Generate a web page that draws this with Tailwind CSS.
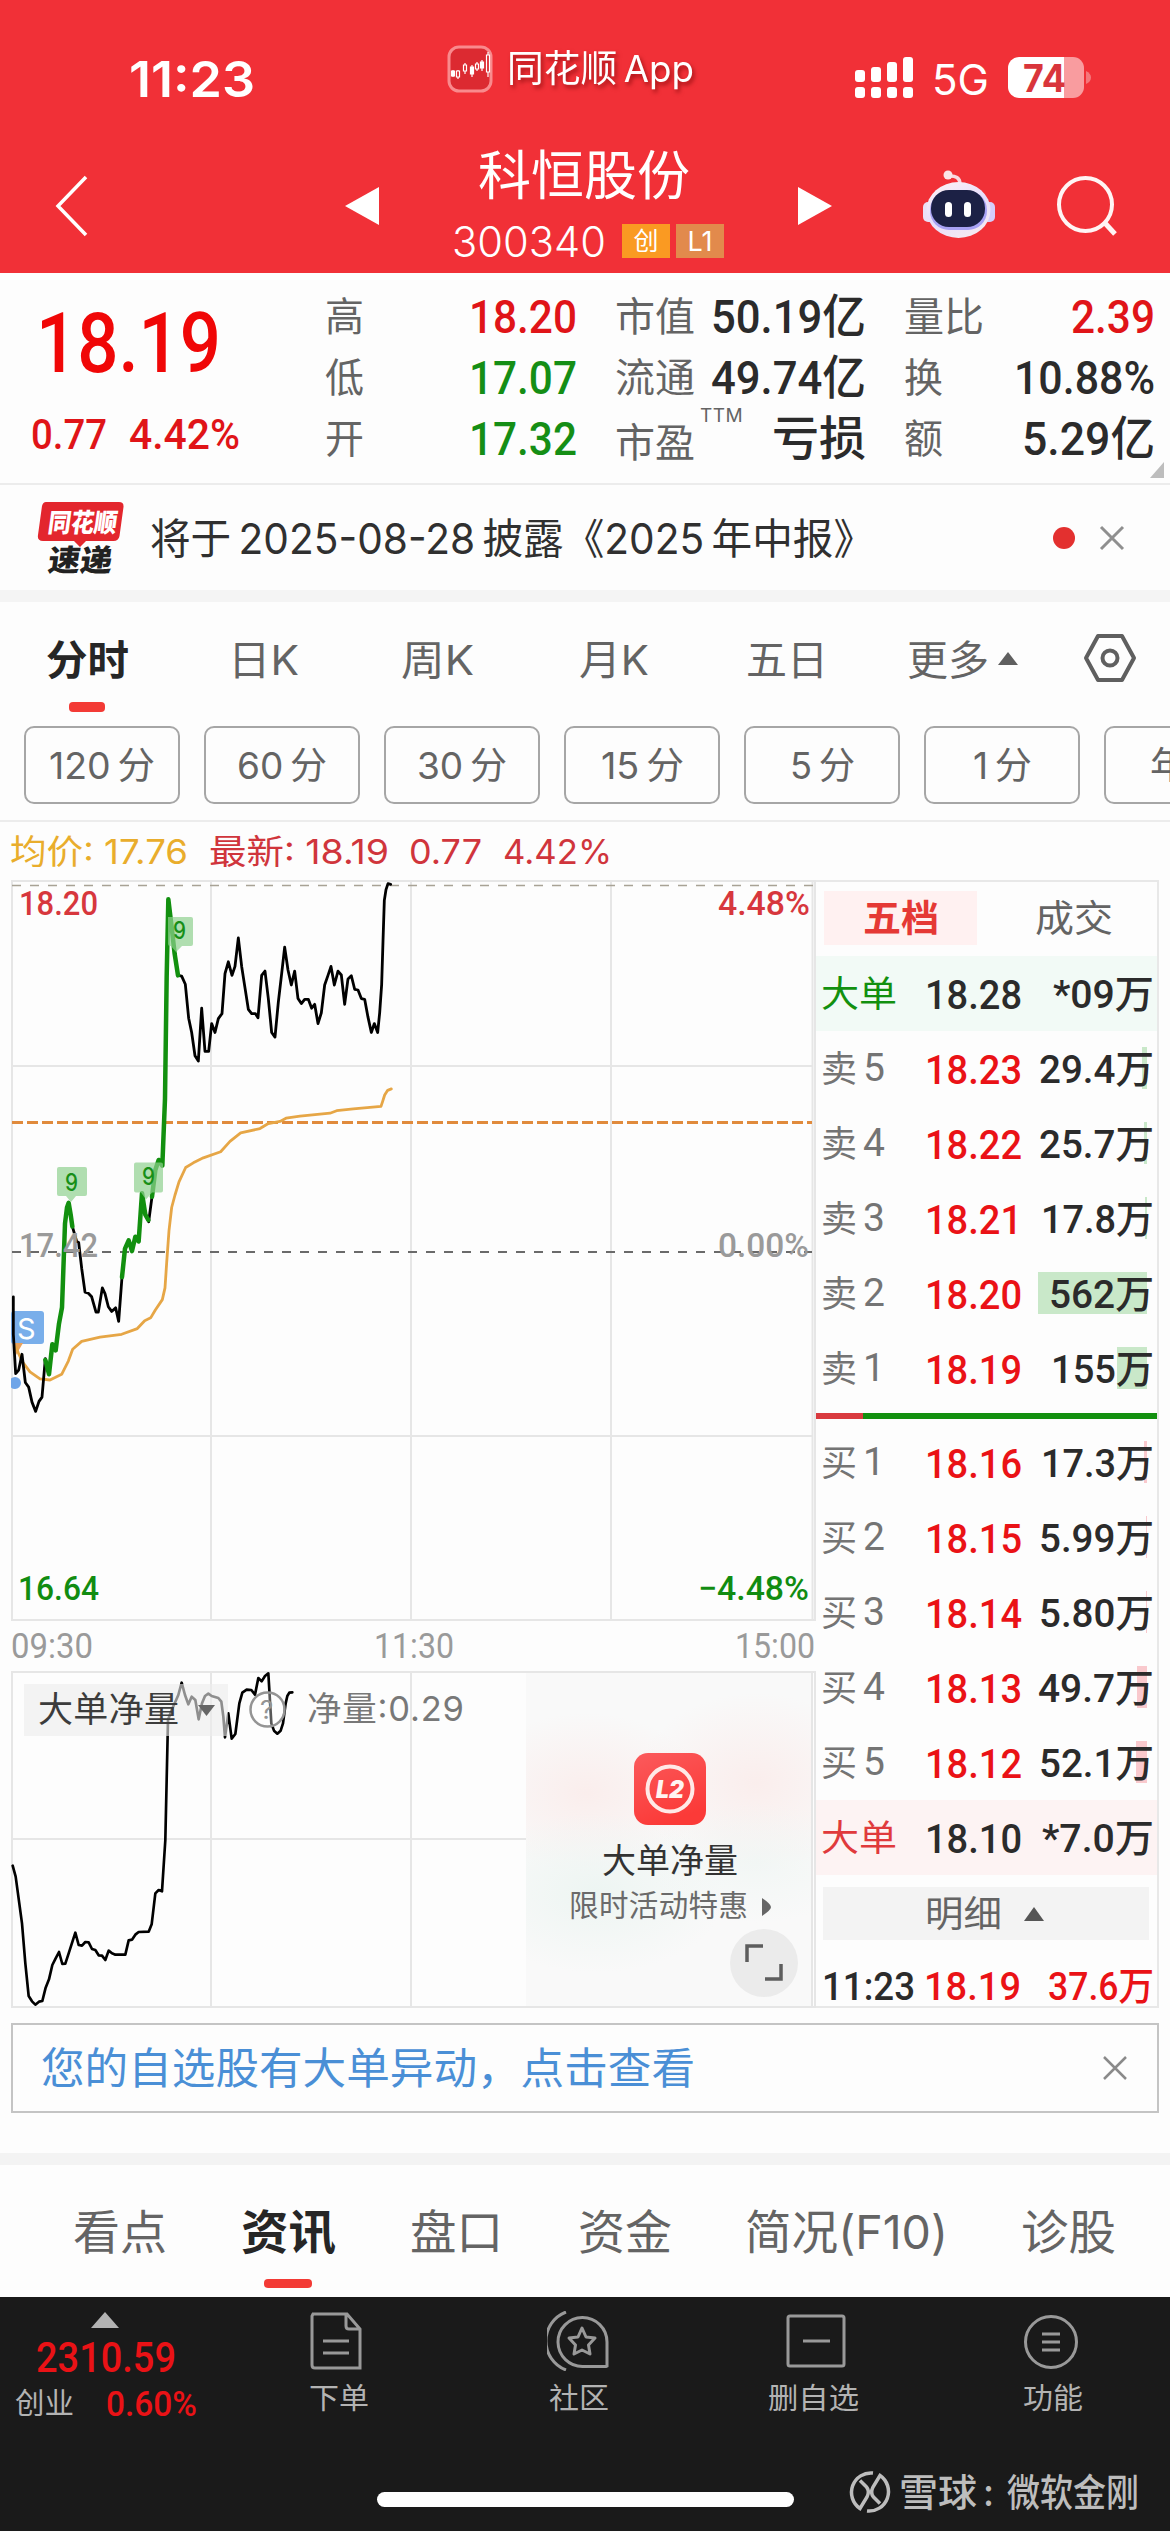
<!DOCTYPE html>
<html lang="zh-CN">
<head>
<meta charset="utf-8">
<title>科恒股份 300340</title>
<script src="https://cdn.jsdelivr.net/npm/@tailwindcss/browser@4"></script>
</head>
<body class="w-[1170px] h-[2532px] overflow-hidden bg-[#fdfdfd] font-['Inter','Noto_Sans_CJK_SC',sans-serif] leading-none text-[#646464]">

<!-- Header -->
<header class="h-[273px] bg-[#f13037] text-white">
  <div class="flex h-[140px] items-start">
    <div class="ml-[129px] mt-[53px] text-[50px] font-semibold" data-w="126">11:23</div>
    <svg class="ml-[192px] mt-[45px]" width="46" height="48" viewBox="0 0 46 48" fill="none">
      <rect x="2" y="2" width="42" height="44" rx="10" fill="#dc2a31" stroke="#f98a8d" stroke-width="3"/>
      <g stroke="#fff" stroke-width="1.2"><path d="M6 25v7M11 25v9M18 18v11M25 20v12M30 17v9M35 15v11M41 7v25"/><path fill="#fff" d="M4.500 26h3v5h-3zM23.500 22h3v7h-3zM33.500 17h3v6h-3z"/><path fill="#dc2a31" d="M9.500 26h3v6h-3zM16.500 20h3v6h-3zM28.500 19h3v5h-3zM39.500 10h3v17h-3z"/></g>
    </svg>
    <div class="ml-[14px] mt-[50px] text-[37px] drop-shadow-[2px_3px_2px_rgba(110,0,0,0.6)]" data-w="187">同花顺&#8201;App</div>
    <svg class="ml-[160px] mt-[56px]" width="60" height="44" viewBox="0 0 60 44" fill="#fff">
      <rect x="1" y="14" width="10" height="12" rx="3"/><rect x="17" y="11" width="10" height="15" rx="3"/><rect x="33" y="6" width="10" height="20" rx="3"/><rect x="49" y="1" width="10" height="25" rx="3"/>
      <rect x="1" y="31" width="10" height="11" rx="3"/><rect x="17" y="31" width="10" height="11" rx="3"/><rect x="33" y="31" width="10" height="11" rx="3"/><rect x="49" y="31" width="10" height="11" rx="3"/>
    </svg>
    <div class="ml-[18px] mt-[58px] text-[42px]" data-w="57">5G</div>
    <svg class="ml-[19px] mt-[57px]" width="86" height="42" viewBox="0 0 86 42">
      <path d="M11 0H56V41H11A11 11 0 0 1 0 30V11A11 11 0 0 1 11 0" fill="#fff"/><path d="M56 0h9a11 11 0 0 1 11 11v19a11 11 0 0 1-11 11h-9z" fill="#f99c9f"/><path d="M78 14q5 2.500 5 6.500t-5 6.500z" fill="#f4777b"/>
      <text x="15" y="34.500" textLength="43" lengthAdjust="spacingAndGlyphs" font-size="38" font-weight="700" fill="#d9353b">74</text>
    </svg>
  </div>
  <div class="flex">
    <svg class="ml-[52px] mt-[34px]" width="38" height="64" viewBox="0 0 38 64" fill="none" stroke="#fff" stroke-width="3.500"><path d="M34 3 6 32l28 29"/></svg>
    <svg class="ml-[255px] mt-[46px]" width="35" height="40" viewBox="0 0 35 40"><path d="M34 1v38L0 20z" fill="#fff"/></svg>
    <div class="ml-[72px] w-[276px]">
      <div class="ml-[26px] mt-[9px] text-[53px]" data-w="212">科恒股份</div>
      <div class="mt-[21px] flex h-[36px] items-center">
        <span class="text-[42px] font-light" data-w="154">300340</span>
        <span class="ml-[16px] flex h-[34px] w-[48px] items-center justify-center bg-[#fa9a22] text-[25px]">创</span>
        <span class="ml-[6px] flex h-[34px] w-[48px] items-center justify-center bg-[#e28a4c] text-[27px]">L1</span>
      </div>
    </div>
    <svg class="ml-[70px] mt-[46px]" width="35" height="40" viewBox="0 0 35 40"><path d="M0 1v38l34-19z" fill="#fff"/></svg>
    <svg class="ml-[89px] mt-[30px]" width="74" height="70" viewBox="0 0 74 70">
      <defs><linearGradient id="shell" x1="0" y1="0" x2=".5" y2="1"><stop offset="0" stop-color="#fff3f3"/><stop offset=".6" stop-color="#e6dcfb"/><stop offset="1" stop-color="#f3e8f2"/></linearGradient></defs>
      <path d="M26 6q12-1 12 8" fill="none" stroke="#f8d9e0" stroke-width="3.500"/><circle cx="26" cy="5" r="4.500" fill="#fbe4e8"/>
      <rect x="1" y="32" width="12" height="20" rx="5" fill="#eadff5"/><rect x="61" y="32" width="12" height="20" rx="5" fill="#d5cdfa"/>
      <ellipse cx="36.500" cy="40" rx="32" ry="28" fill="url(#shell)"/>
      <rect x="8" y="21" width="57" height="39" rx="19" fill="#a8a2f4"/><rect x="9" y="20" width="54" height="37" rx="18" fill="#1c2145"/>
      <rect x="23" y="32" width="7" height="15" rx="3.500" fill="#fff"/><rect x="42" y="32" width="7" height="15" rx="3.500" fill="#fff"/>
    </svg>
    <svg class="ml-[60px] mt-[35px]" width="64" height="64" viewBox="0 0 64 64" fill="none" stroke="#fff4f4" stroke-width="4"><circle cx="29.500" cy="29.500" r="26.500"/><path d="m48 47 11 12" stroke-width="5"/></svg>
  </div>
</header>

<!-- Quote summary -->
<section class="relative flex h-[212px] border-b-2 border-[#ececec] text-[40px]">
  <div class="ml-[31px] w-[294px] font-['Roboto'] font-medium text-[#f00707]">
    <div class="ml-[5px] flex h-[136px] items-center text-[83px]"><span data-w="185">18.19</span></div>
    <div class="flex h-[48px] items-center text-[43px] text-[#e01418]"><span data-w="76">0.77</span><span class="ml-[22px]" data-w="111">4.42%</span></div>
  </div>
  <div class="grid w-[252px] grid-cols-[minmax(0,1fr)_auto] grid-rows-[61px_61px_61px] content-start items-center pt-[12px] [&>*:nth-child(even)]:justify-self-end">
    <span data-w="39">高</span><span class="font-['Roboto'] text-[47px] font-medium text-[#e01418]" data-w="108">18.20</span>
    <span data-w="39">低</span><span class="font-['Roboto'] text-[47px] font-medium text-[#158e15]" data-w="108">17.07</span>
    <span data-w="39">开</span><span class="font-['Roboto'] text-[47px] font-medium text-[#158e15]" data-w="108">17.32</span>
  </div>
  <div class="ml-[38px] grid w-[251px] grid-cols-[minmax(0,1fr)_auto] grid-rows-[61px_61px_61px] content-start items-center pt-[12px] [&>*:nth-child(even)]:justify-self-end">
    <span data-w="80">市值</span><span class="font-['Roboto','Noto_Sans_CJK_SC'] text-[47px] font-medium text-[#2b2b2b]" data-w="155">50.19亿</span>
    <span data-w="80">流通</span><span class="font-['Roboto','Noto_Sans_CJK_SC'] text-[47px] font-medium text-[#2b2b2b]" data-w="155">49.74亿</span>
    <span class="flex"><span class="mt-[8px]" data-w="80">市盈</span><span class="ml-[5px] -mt-[8px] text-[19px] tracking-wide">TTM</span></span><span class="text-[47px] font-medium text-[#2b2b2b]" data-w="94">亏损</span>
  </div>
  <div class="ml-[38px] grid w-[251px] grid-cols-[minmax(0,1fr)_auto] grid-rows-[61px_61px_61px] content-start items-center pt-[12px] [&>*:nth-child(even)]:justify-self-end">
    <span data-w="80">量比</span><span class="font-['Roboto'] text-[47px] font-medium text-[#e01418]" data-w="84">2.39</span>
    <span data-w="39">换</span><span class="font-['Roboto'] text-[47px] font-medium text-[#2b2b2b]" data-w="141">10.88%</span>
    <span data-w="39">额</span><span class="font-['Roboto','Noto_Sans_CJK_SC'] text-[47px] font-medium text-[#2b2b2b]" data-w="133">5.29亿</span>
  </div>
  <svg class="absolute bottom-[5px] right-[6px]" width="14" height="16" viewBox="0 0 14 16"><path d="M14 0v16H0z" fill="#bdbdbd"/></svg>
</section>

<!-- Express news -->
<section class="flex h-[105px] items-center">
  <svg class="ml-[36px] mt-[2px] overflow-visible" width="92" height="76" viewBox="0 0 92 76" font-family="'Noto Sans CJK SC'" font-weight="900">
    <path d="M10 1h73q5 0 4.500 5l-4 29q-1 5-6 5H50l-6 6-6-6H7q-6 0-5-6L6 5q1-4 4-4" fill="#e3262d"/>
    <text transform="translate(11 31) skewX(-8)" textLength="69" lengthAdjust="spacingAndGlyphs" font-size="26" fill="#fff">同花顺</text>
    <text transform="translate(11 70) skewX(-8)" textLength="64" lengthAdjust="spacingAndGlyphs" font-size="30" fill="#222">速递</text>
  </svg>
  <div class="ml-[22px] text-[42px] text-[#303030]" data-w="724">将于&#8201;2025-08-28&#8201;披露《2025&#8201;年中报》</div>
  <div class="ml-[179px] size-[22px] rounded-full bg-[#e3302f]"></div>
  <svg class="ml-[24px]" width="26" height="26" viewBox="0 0 26 26" stroke="#8f8f8f" stroke-width="3"><path d="m2 2 22 22M24 2 2 24"/></svg>
</section>
<div class="h-[12px] bg-[#f4f4f4]"></div>

<!-- Period tabs -->
<nav class="relative flex h-[114px] items-center text-[41px]">
  <span class="ml-[46px] font-bold text-[#262626]" data-w="83">分时</span>
  <span class="ml-[99px]" data-w="71">日K</span>
  <span class="ml-[102px]" data-w="73">周K</span>
  <span class="ml-[105px]" data-w="70">月K</span>
  <span class="ml-[97px]" data-w="82">五日</span>
  <span class="ml-[79px]" data-w="82">更多</span>
  <svg class="ml-[9px] mb-[2px]" width="20" height="13" viewBox="0 0 20 13"><path d="m10 0 10 13H0z" fill="#5f5f5f"/></svg>
  <svg class="ml-[65px] mb-[2px]" width="54" height="50" viewBox="0 0 54 50" fill="none" stroke="#5f5f5f" stroke-width="4"><path d="M15 3h24l12 22-12 22H15L3 25z" stroke-linejoin="round"/><circle cx="27" cy="25" r="7.500"/></svg>
  <i class="absolute left-[69px] top-[100px] h-[10px] w-[36px] rounded-[4px] bg-[#f33a35]"></i>
</nav>
<div class="flex h-[106px] gap-[24px] overflow-hidden border-b-2 border-[#ececec] pl-[24px] pt-[10px] text-[37px]" id="pills"></div>

<!-- Price line -->
<div class="flex h-[58px] items-center text-[34px] text-[#d0353c]">
  <span class="ml-[10px] text-[#e9ad2c]" data-w="178">均价: 17.76</span><span class="ml-[21px]" data-w="180">最新: 18.19</span><span class="ml-[20px]" data-w="73">0.77</span><span class="ml-[21px]" data-w="109">4.42%</span>
</div>

<!-- Charts and order book -->
<main class="flex h-[1128px] pl-[11px]">
  <div class="w-[805px]">
    <svg class="block" width="805" height="741" viewBox="11 880 805 741" font-family="Roboto" font-weight="500" font-size="34">
      <g fill="none" stroke="#e6e6e6" stroke-width="2"><path d="M12 881H815V1620H12zM211 881V1620M411 881V1620M611 881V1620M12 1066H813M12 1436H813M812.500 881V1620"/></g>
      <path d="M12 885.500H813" stroke="#a8a295" stroke-width="1.500" stroke-dasharray="9 9"/>
      <path d="M12 1122.500H812" stroke="#e08a3c" stroke-width="3" stroke-dasharray="11 4"/>
      <path d="M12 1252H812" stroke="#6a6a6a" stroke-width="1.800" stroke-dasharray="9 9"/>
      <rect x="11" y="1311" width="33" height="33" rx="3" fill="#79aeea"/><path d="M13 1343h10l-7 12" fill="#e9a25c"/><circle cx="15" cy="1383" r="6" fill="#6fa5e8"/>
      <g transform="translate(0 870) scale(.33333 .35714)" fill="none" stroke-linejoin="round" stroke-linecap="round">
        <path vector-effect="non-scaling-stroke" stroke="#e6a646" stroke-width="2.800" d="M48 1335L55 1352L68 1378L90 1405L120 1425L150 1428L185 1412L205 1375L218 1342L245 1320L300 1308L365 1300L412 1284L434 1262L452 1254L466 1232L487 1203L495 1170L500 1100L507 1010L515 945L525 910L537 873L557 833L580 820L610 806L662 789L690 760L722 736L780 724L805 710L840 704L858 695L900 689L990 681L1010 674L1060 669L1143 662L1148 648L1154 630L1163 617L1174 613"/>
        <path vector-effect="non-scaling-stroke" stroke="#000" stroke-width="2.800" d="M40 1195L40 1300L47 1410L56 1400L66 1356L76 1435L86 1448L96 1490L107 1516L117 1488L126 1476L136 1368L147 1412L157 1328L167 1345L177 1270L186 1225L195 990L201 945L206 932L212 965L217 998L230 1040L236 1043L245 1115L255 1182L265 1185L275 1195L288 1238L295 1238L307 1170L315 1186L325 1223L335 1236L347 1226L356 1264L366 1140L375 1060L386 1037L396 1067L406 1027L416 1040L426 905L436 965L446 985L456 915L466 840L476 812L487 828L495 640L500 300L505 82L515 160L524 235L534 295L545 297L556 320L566 415L575 455L585 520L595 535L605 387L615 508L626 508L635 430L645 455L655 416L666 402L675 290L685 257L696 295L705 270L715 190L725 270L735 330L745 390L755 402L766 402L774 414L785 295L795 283L805 360L815 455L825 468L835 370L845 290L854 216L864 280L874 322L884 283L894 360L904 374L914 362L925 362L935 387L944 376L954 430L964 400L974 322L984 295L993 270L1003 322L1014 283L1024 294L1034 376L1044 305L1054 296L1064 334L1074 336L1084 360L1094 362L1104 412L1114 455L1123 430L1133 455L1139 400L1145 320L1149 200L1153 85L1158 55L1164 38L1172 40"/>
        <path vector-effect="non-scaling-stroke" stroke="#12900f" stroke-width="4.500" d="M136 1372L147 1412L157 1328L167 1345L177 1270L186 1225L195 990L201 945L206 932L212 965L217 998M366 1140L375 1060L386 1037L396 1067L406 1027L416 1040L426 905L436 965L445 980M456 915L466 840L476 812L487 828L495 640L500 300L505 82L515 160L524 235L534 295"/>
      </g>
      <g fill="#8fd08f" fill-opacity=".7"><path d="M59 1167h26q2 0 2 2v25q0 2-2 2h-9l-5 6-5-6h-7q-2 0-2-2v-25q0-2 2-2zM136 1162.500h25q2 0 2 2v26q0 2-2 2h-9l-6 7-5-7h-5q-2 0-2-2v-26q0-2 2-2zM168 917h23q2 0 2 2v25q0 2-2 2h-9l-6 6-5-6h-1q-2 0-2-2z"/></g>
      <g font-size="24" fill="#178f17" font-family="Inter"><text x="65" y="1191" textLength="13" lengthAdjust="spacingAndGlyphs">9</text><text x="142" y="1185" textLength="13" lengthAdjust="spacingAndGlyphs">9</text><text x="173" y="939" textLength="13" lengthAdjust="spacingAndGlyphs">9</text></g>
      <text x="17" y="1338.500" fill="#fff" font-size="29" font-family="Inter" font-weight="400">S</text>
      <text x="19" y="915" textLength="79" fill="#d7373d" lengthAdjust="spacingAndGlyphs">18.20</text>
      <text x="718" y="915" textLength="92" fill="#d7373d" lengthAdjust="spacingAndGlyphs">4.48%</text>
      <text x="19" y="1257" textLength="79" fill="#9a9a9a" lengthAdjust="spacingAndGlyphs">17.42</text>
      <text x="718" y="1257" textLength="91" fill="#9a9a9a" lengthAdjust="spacingAndGlyphs">0.00%</text>
      <text x="18" y="1600" textLength="81" fill="#118c11" lengthAdjust="spacingAndGlyphs">16.64</text>
      <text x="698" y="1600" textLength="111" fill="#118c11" lengthAdjust="spacingAndGlyphs">−4.48%</text>
    </svg>
    <div class="flex h-[50px] items-center justify-between pb-[2px] pr-[1px] font-['Roboto'] text-[35px] text-[#9a9a9a]"><span data-w="82">09:30</span><span data-w="80">11:30</span><span data-w="80">15:00</span></div>
    <svg class="block" width="805" height="337" viewBox="11 1671 805 337">
      <defs>
        <radialGradient id="warm"><stop offset="0" stop-color="#fbe6e4"/><stop offset="1" stop-color="#fbe6e4" stop-opacity="0"/></radialGradient>
        <radialGradient id="cool"><stop offset="0" stop-color="#edf5f2"/><stop offset="1" stop-color="#edf5f2" stop-opacity="0"/></radialGradient>
        <linearGradient id="l2" x1="0" y1="0" x2=".4" y2="1"><stop offset="0" stop-color="#fb5a5c"/><stop offset="1" stop-color="#fb3a38"/></linearGradient>
      </defs>
      <path d="M12 1672H815V2007H12zM211 1671V2008M411 1671V2008M12 1839H528" fill="none" stroke="#e6e6e6" stroke-width="2"/>
      <g transform="translate(0 1660) scale(.33333)" fill="none" stroke="#000" stroke-width="8" stroke-linejoin="round" stroke-linecap="round">
        <path d="M38 617L47 650L66 790L76 910L86 1008L96 1024L106 1034L117 1025L127 1023L137 983L147 958L157 915L167 895L177 876L187 912L196 911L206 880L226 818L236 855L246 857L256 846L266 847L276 867L286 870L296 886L306 887L316 900L326 872L336 880L346 884L376 884L386 841L396 839L406 824L416 816L446 815L455 793L466 700L476 690L486 694L496 540L504 180L515 150L535 105L545 68L555 105L565 133L575 110L586 120L596 178L606 130L615 108L625 101L635 108L655 114L664 125L670 170L675 232L685 160L695 236L706 222L718 130L727 98L740 89L754 90L765 104L775 54L785 64L795 48L805 40L814 190L822 212L832 221L842 212L849 190L857 130L862 108L868 98L877 97"/>
      </g>
      <rect x="24" y="1684" width="204" height="52" fill="#ededed" fill-opacity=".6"/>
      <text x="38" y="1722" textLength="141" font-size="35" fill="#3c3c3c">大单净量</text>
      <path d="M198 1705h17l-8.500 11z" fill="#666"/>
      <circle cx="267.500" cy="1709.500" r="17" fill="#fff" fill-opacity=".35" stroke="#949494" stroke-width="2.500"/><text x="260" y="1719" font-size="26" fill="#949494">?</text>
      <text x="307" y="1721" textLength="157" font-size="34.500" fill="#787878">净量:0.29</text>
      <rect x="526" y="1673" width="286" height="333" fill="#f9f9f9"/>
      <svg x="526" y="1673" width="286" height="333"><ellipse cx="60" cy="120" rx="120" ry="80" fill="url(#warm)" opacity=".6"/><ellipse cx="230" cy="110" rx="120" ry="90" fill="url(#warm)" opacity=".6"/><ellipse cx="70" cy="220" rx="130" ry="80" fill="url(#cool)"/><ellipse cx="230" cy="190" rx="110" ry="60" fill="url(#cool)" opacity=".6"/></svg>
      <path d="M812 1671V2008" stroke="#e6e6e6" stroke-width="2"/>
      <rect x="634" y="1753" width="72" height="72" rx="14" fill="url(#l2)"/><circle cx="670" cy="1789" r="22.500" fill="none" stroke="#ffe9e7" stroke-width="4"/>
      <text x="656" y="1798" textLength="28" lengthAdjust="spacingAndGlyphs" font-size="24" font-weight="900" font-style="italic" fill="#fff4f2">L2</text>
      <text x="602" y="1873" textLength="136" font-size="34" fill="#333">大单净量</text>
      <text x="569" y="1916" textLength="179" font-size="29.500" fill="#6a6a6a">限时活动特惠</text>
      <path d="M762 1898q9 6 9 9t-9 9z" fill="#666"/>
      <circle cx="764" cy="1963" r="34" fill="#ebebeb"/><path d="M747 1962v-16h16M781 1964v15h-16" fill="none" stroke="#5d5d5d" stroke-width="3.500"/>
    </svg>
  </div>

  <aside class="flex w-[343px] flex-col border-y-2 border-r-2 border-[#e8e8e8] text-[36px]">
    <div class="mt-[9px] flex h-[54px] items-center text-[37px]">
      <span class="ml-[8px] flex h-full w-[153px] items-center justify-center bg-[#fff1f1] font-bold text-[#e53935]"><span data-w="76">五档</span></span>
      <span class="ml-[58px]" data-w="78">成交</span>
    </div>
    <div class="mt-[11px]" id="asks"></div>
    <div class="mt-[7px] mb-[6px] flex h-[6px]"><i class="w-[47px] bg-[#d93a3f]"></i><i class="flex-1 bg-[#12900f]"></i></div>
    <div id="bids"></div>
    <div class="ml-[7px] mr-[8px] mt-[12px] flex h-[53px] items-center bg-[#f3f3f3]"><span class="ml-[102px]" data-w="77">明细</span><svg class="ml-[22px]" width="20" height="14" viewBox="0 0 20 14"><path d="m10 0 10 14H0z" fill="#555"/></svg></div>
    <div class="mt-[24px] flex flex-1 items-center font-['Roboto','Noto_Sans_CJK_SC'] text-[39px] font-medium">
      <span class="ml-[6px] text-[#2b2b2b]" data-w="93">11:23</span><span class="ml-[9px] text-[#ea1216]" data-w="97">18.19</span><span class="ml-[27px] text-[#ea1216]" data-w="106">37.6万</span>
    </div>
  </aside>
</main>

<!-- Alert -->
<div class="mx-[11px] mt-[15px] flex h-[90px] items-center border-2 border-[#c4c4c4] pr-[29px] text-[43px] text-[#4a8fd6]">
  <span class="ml-[28px] flex-1"><span data-w="654">您的自选股有大单异动，点击查看</span></span>
  <svg width="26" height="26" viewBox="0 0 26 26" stroke="#8a8a8a" stroke-width="2.500"><path d="m2 2 22 22M24 2 2 24"/></svg>
</div>
<div class="mt-[40px] h-[12px] bg-[#f3f3f3]"></div>

<!-- Section tabs -->
<nav class="relative flex h-[132px] items-center text-[47px]">
  <span class="ml-[73px]" data-w="94">看点</span>
  <span class="ml-[74px] font-bold text-[#262626]" data-w="95">资讯</span>
  <span class="ml-[74px]" data-w="93">盘口</span>
  <span class="ml-[75px]" data-w="94">资金</span>
  <span class="ml-[73px]" data-w="203">简况(F10)</span>
  <span class="ml-[73px]" data-w="95">诊股</span>
  <i class="absolute left-[264px] top-[114px] h-[9px] w-[48px] rounded-[4px] bg-[#f33a35]"></i>
</nav>

<!-- Footer -->
<footer class="relative h-[234px] bg-[#1a1a1a] text-[29px] text-[#b3b3b3]">
  <div class="flex">
    <div class="w-[210px] font-['Roboto','Noto_Sans_CJK_SC'] font-medium text-[#ea1216]">
      <svg class="ml-[91px] mt-[15px]" width="28" height="16" viewBox="0 0 28 16"><path d="m14 0 14 16H0z" fill="#b3b3b3"/></svg>
      <div class="ml-[36px] mt-[7px] text-[42px]" data-w="140">2310.59</div>
      <div class="mt-[9px] flex items-center"><span class="ml-[15px] font-normal text-[#b3b3b3]" data-w="59">创业</span><span class="ml-[32px] text-[35px]" data-w="91">0.60%</span></div>
    </div>
    <div class="ml-[98px] mt-[15px] flex w-[62px] flex-col items-center">
      <svg class="mr-[6px]" width="54" height="58" viewBox="0 0 54 58" fill="none" stroke="#999" stroke-width="3"><path d="M4 2h34l13 15v39H6q-3 0-3-3V4zM37 2v12q0 3 3 3h11" /><path d="M14 29h26M14 41h26"/></svg>
      <span class="mt-[14px]" data-w="60">下单</span>
    </div>
    <div class="ml-[176px] mt-[14px] flex w-[66px] flex-col items-center">
      <svg class="mr-[3px]" width="62" height="60" viewBox="0 0 62 60" fill="none" stroke="#999" stroke-width="3"><path d="M60 55V31A24.500 24.500 0 1 0 36 55.500h23zM19 1A31 31 0 0 0 19 59"/><path d="m35 17 4 9 9 1-6.500 7 1.500 9-8-4-8 4 1.500-9-6.500-7 9-1z" stroke-linejoin="round"/></svg>
      <span class="mt-[13px]" data-w="60">社区</span>
    </div>
    <div class="ml-[155px] mt-[17px] flex w-[92px] flex-col items-center">
      <svg class="ml-[5px]" width="60" height="54" viewBox="0 0 60 54" fill="none" stroke="#999" stroke-width="3"><rect x="2" y="2" width="56" height="50" rx="2"/><path d="M17 27h27"/></svg>
      <span class="mt-[16px]" data-w="91">删自选</span>
    </div>
    <div class="ml-[163px] mt-[17px] flex w-[62px] flex-col items-center">
      <svg class="mr-[4px]" width="56" height="56" viewBox="0 0 56 56" fill="none" stroke="#999" stroke-width="3"><circle cx="28" cy="28" r="25.500"/><path d="M19 20h18M19 28h18M19 36h18"/></svg>
      <span class="mt-[14px]" data-w="60">功能</span>
    </div>
  </div>
  <div class="absolute left-[377px] top-[195px] h-[15px] w-[417px] rounded-full bg-white"></div>
  <div class="absolute left-[848px] top-[172px] flex h-[46px] items-center text-[38px] font-medium text-[#bdbdbd]">
    <svg width="44" height="44" viewBox="0 0 44 44" fill="none" stroke="#bdbdbd" stroke-width="3.500"><g id="swirl"><path d="M25 3A19.500 19.500 0 0 0 12 38.500L19 27Q22 21 18.500 17L12 10.500"/></g><use href="#swirl" transform="rotate(180 22 22)"/></svg>
    <span class="ml-[7px]" data-w="78">雪球</span><span class="ml-[6px]" data-w="11">:</span><span class="ml-[13px]" data-w="132">微软金刚</span>
  </div>
</footer>

<script>
  // Period pills: [label, text width]
  const pills = [['120', 106], ['60', 90], ['30', 90], ['15', 83], ['5', 65], ['1', 59], ['年K', 64]];
  document.getElementById('pills').innerHTML = pills.map(([t, w]) =>
    `<span class="flex h-[78px] w-[156px] shrink-0 items-center justify-center rounded-[10px] border-2 border-[#a6a6a6]"><span data-w="${w}">${t === '年K' ? t : t + '\u2009分'}</span></span>`).join('');

  // Order book levels: [side, level, price, volume, volume text width, depth bar width]
  const asks = [['大单', '', '18.28', '*09万', 101, 0], ['卖', 5, '18.23', '29.4万', 115, 5], ['卖', 4, '18.22', '25.7万', 115, 3], ['卖', 3, '18.21', '17.8万', 113, 2], ['卖', 2, '18.20', '562万', 105, 109], ['卖', 1, '18.19', '155万', 103, 30]];
  const bids = [['买', 1, '18.16', '17.3万', 113, 3], ['买', 2, '18.15', '5.99万', 115, 1], ['买', 3, '18.14', '5.80万', 115, 1], ['买', 4, '18.13', '49.7万', 116, 10], ['买', 5, '18.12', '52.1万', 115, 11], ['大单', '', '18.10', '*7.0万', 112, 0]];
  const row = (bar, label, band) => ([side, lv, price, vol, w, depth]) => {
    const big = side === '大单';
    return `<div class="relative flex h-[75px] items-center ${big ? band : ''}">
      <i class="absolute right-[10px] top-[16px] h-[42px] ${bar}" style="width:${depth}px"></i>
      <span class="ml-[5px] flex w-[104px] items-center ${big ? label : 'text-[#747474]'}"><span data-w="${big ? 76 : 36}">${side}</span><span class="ml-[6px] font-['Roboto'] text-[39px]">${lv}</span></span>
      <span class="relative font-['Roboto'] text-[40px] font-medium ${big ? 'text-[#2b2b2b]' : 'text-[#ea1216]'}" data-w="97">${price}</span>
      <span class="relative ml-auto mr-[3px] font-['Roboto','Noto_Sans_CJK_SC'] text-[39px] font-medium text-[#2b2b2b]" data-w="${w}">${vol}</span></div>`;
  };
  document.getElementById('asks').innerHTML = asks.map(row('bg-[#c9e8c9]', 'text-[#12900f]', 'bg-[#f2faf6]')).join('');
  document.getElementById('bids').innerHTML = bids.map(row('bg-[#f9c9cd]', 'text-[#e03a3c]', 'bg-[#fdf3f3]')).join('');

  // Set each label to its exact width
  document.querySelectorAll('[data-w]').forEach(el => {
    const w = el.dataset.w, t = el.textContent;
    el.innerHTML = `<svg class="block h-[1em] overflow-visible" width="${w}"><text y="0.87em" fill="currentColor" textLength="${w}" lengthAdjust="spacingAndGlyphs">${t}</text></svg>`;
  });
</script>
</body>
</html>
